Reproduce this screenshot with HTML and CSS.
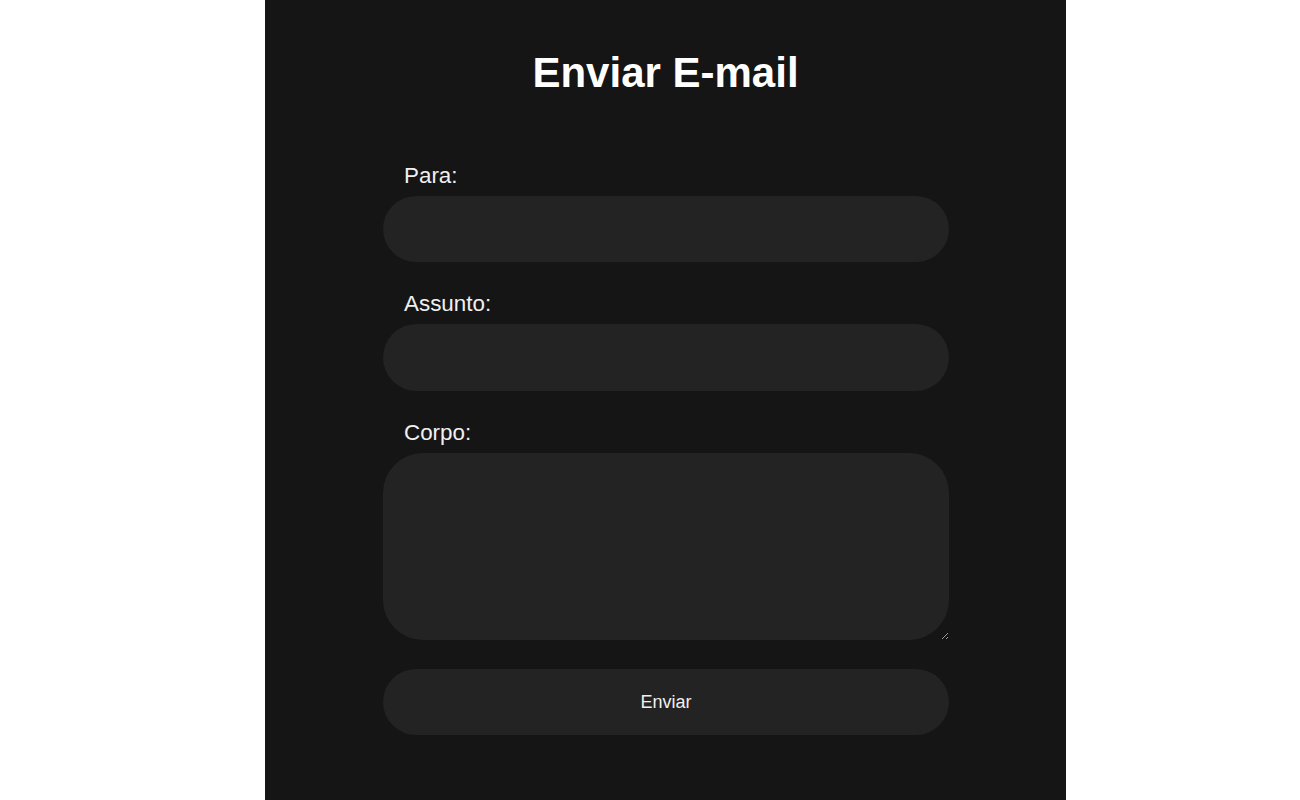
FILE: index.html
```html
<!DOCTYPE html>
<html lang="pt">
<head>
<meta charset="utf-8">
<title>Enviar E-mail</title>
<link rel="stylesheet" href="styles.css">
</head>
<body>
<div class="panel">
  <h1 class="title">Enviar E-mail</h1>
  <form class="form">
    <label class="label" for="para">Para:</label>
    <input class="field" id="para" type="email">
    <label class="label" for="assunto">Assunto:</label>
    <input class="field field-second" id="assunto" type="text">
    <label class="label" for="corpo">Corpo:</label>
    <textarea class="field area" id="corpo"></textarea>
    <button class="send" type="button">Enviar</button>
  </form>
</div>
</body>
</html>
```

FILE: styles.css
```css
html, body {
  margin: 0;
  padding: 0;
  background: #ffffff;
}
body {
  font-family: "Liberation Sans", Arial, sans-serif;
}
.panel {
  margin-left: 265px;
  width: 801px;
  min-height: 800px;
  background: #151515;
  box-sizing: border-box;
  padding-top: 48px;
}
.title {
  margin: 0;
  font-size: 42px;
  line-height: 50px;
  font-weight: bold;
  color: #ffffff;
  text-align: center;
}
.form {
  display: flex;
  flex-direction: column;
  padding: 0 117px 0 118px;
  margin-top: 65px;
}
.label {
  display: block;
  font-size: 22.4px;
  line-height: 26px;
  color: #f0f0f0;
  padding-left: 21px;
  margin-bottom: 7px;
}
.field {
  display: block;
  box-sizing: border-box;
  width: 100%;
  height: 66px;
  margin: 0 0 29px 0;
  border: none;
  outline: none;
  border-radius: 40px;
  background: #232323;
  color: #eeeeee;
  font-family: "Liberation Sans", Arial, sans-serif;
  font-size: 18px;
  padding: 0 24px;
}
.field-second {
  height: 67px;
}
.area {
  height: 187px;
  margin-bottom: 29px;
  padding: 20px 24px;
  resize: vertical;
}
.send {
  display: block;
  width: 100%;
  height: 66px;
  border: none;
  border-radius: 40px;
  background: #232323;
  color: #f0f0f0;
  font-family: "Liberation Sans", Arial, sans-serif;
  font-size: 18px;
  cursor: pointer;
}
```
